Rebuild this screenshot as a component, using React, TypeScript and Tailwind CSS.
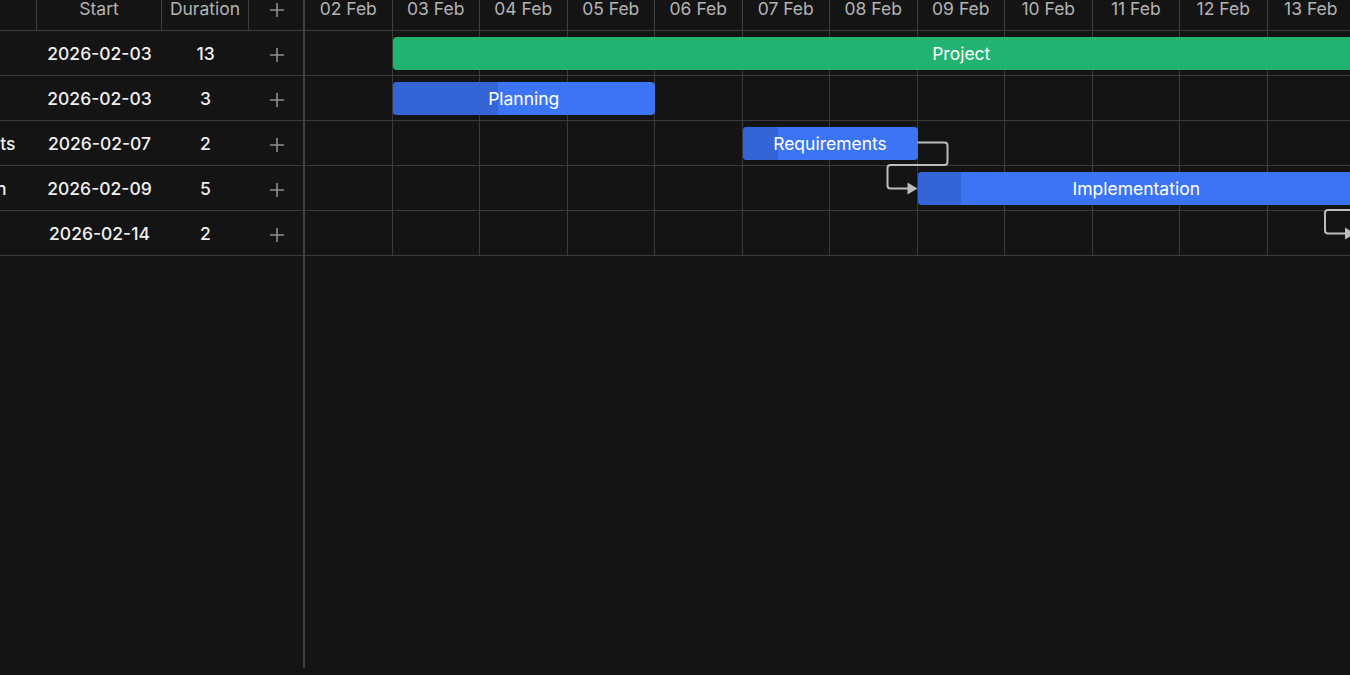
import * as React from "react";
import { Plus } from "lucide-react";

type Task = {
  id: number;
  name: string;
  indent: number;
  start: string;
  duration: number;
  day: number;
  progress: number;
  summary?: boolean;
};

const DAYS = ["02 Feb", "03 Feb", "04 Feb", "05 Feb", "06 Feb", "07 Feb", "08 Feb", "09 Feb", "10 Feb", "11 Feb", "12 Feb", "13 Feb", "14 Feb", "15 Feb", "16 Feb"];

const TASKS: Task[] = [
  { id: 1, name: "Project", indent: 8, start: "2026-02-03", duration: 13, day: 1, progress: 0, summary: true },
  { id: 2, name: "Planning", indent: 60, start: "2026-02-03", duration: 3, day: 1, progress: 0.4 },
  { id: 3, name: "Requirements", indent: 100, start: "2026-02-07", duration: 2, day: 5, progress: 0.2 },
  { id: 4, name: "Implementation", indent: 77, start: "2026-02-09", duration: 5, day: 7, progress: 0.1 },
  { id: 5, name: "Testing", indent: 80, start: "2026-02-14", duration: 2, day: 12, progress: 0 },
];

const COL = 87.5;
const ROW = 45;
const HEAD = 45;

const styles = {
  headCell: `
    flex items-center justify-center h-full pt-[3px]
    border-r border-[#3e3e3e] text-[17.5px] text-[#b3b3b3]
  `,
  row: `
    grid grid-cols-[237px_125px_87px_1fr] items-center h-[45px] pt-[3px]
    border-b border-[#3b3b3b] text-[17.5px] font-medium text-[#efefef]
  `,
};

// elbow connectors between dependent bars, drawn in chart coordinates
const Links = () => {
  const y = (i: number) => HEAD + i * ROW + ROW / 2;
  const paths: { from: number; to: number; x1: number; x2: number }[] = [
    { from: 2, to: 3, x1: 7 * COL, x2: 7 * COL },
    { from: 3, to: 4, x1: 12 * COL, x2: 12 * COL },
  ];
  return (
    <svg className="absolute left-0 top-0 pointer-events-none" width={DAYS.length * COL} height={400}>
      {paths.map((p, i) => {
        const ya = y(p.from) - 1;
        const yb = y(p.to);
        const mid = HEAD + p.to * ROW - 1;
        const d = `M ${p.x1} ${ya} H ${p.x1 + 27} Q ${p.x1 + 30} ${ya} ${p.x1 + 30} ${ya + 3} V ${mid - 3} Q ${p.x1 + 30} ${mid} ${p.x1 + 27} ${mid} H ${p.x2 - 27} Q ${p.x2 - 30} ${mid} ${p.x2 - 30} ${mid + 3} V ${yb - 3} Q ${p.x2 - 30} ${yb} ${p.x2 - 27} ${yb} H ${p.x2 - 9}`;
        return (
          <g key={i}>
            <path d={d} fill="none" stroke="#bcbcbc" strokeWidth={2} />
            <polygon points={`${p.x2 - 10},${yb - 6} ${p.x2},${yb} ${p.x2 - 10},${yb + 6}`} fill="#bcbcbc" />
          </g>
        );
      })}
    </svg>
  );
};

const App: React.FC = () => {
  return (
    <div className="h-screen w-screen overflow-hidden bg-[#141414] font-['Inter','Noto_Sans',sans-serif]">
      <div className="flex h-[682px] -mt-[14px] -ml-[200px]">
        {/* task grid */}
        <div className="w-[505px] shrink-0 border-r-2 border-[#3e3e3e]">
          <div className="grid grid-cols-[237px_125px_87px_1fr] h-[45px] border-b border-[#3e3e3e]">
            <div className={styles.headCell}>Task name</div>
            <div className={styles.headCell}>Start</div>
            <div className={styles.headCell}>Duration</div>
            <div className="flex items-center justify-center pt-[3px] pl-[2px] text-[#8e8e8e]">
              <Plus size={22} strokeWidth={1.75} />
            </div>
          </div>
          {TASKS.map((t) => (
            <div key={t.id} className={styles.row}>
              <div className="truncate" style={{ paddingLeft: t.indent }}>
                {t.name}
              </div>
              <div className="text-center">{t.start}</div>
              <div className="text-center">{t.duration}</div>
              <div className="flex justify-center pl-[2px] text-[#8e8e8e]">
                <Plus size={22} strokeWidth={1.75} />
              </div>
            </div>
          ))}
        </div>

        {/* timeline */}
        <div className="relative flex-1 overflow-hidden">
          <div className="flex h-[45px] border-b border-[#3e3e3e] w-max">
            {DAYS.map((d) => (
              <div
                key={d}
                className="w-[87.5px] shrink-0 flex items-center justify-center pt-[3px] border-r border-[#3e3e3e] text-[17.5px] text-[#b3b3b3]"
              >
                {d}
              </div>
            ))}
          </div>
          {TASKS.map((t) => (
            <div key={t.id} className="relative flex h-[45px] border-b border-[#3b3b3b] w-max">
              {DAYS.map((d) => (
                <div key={d} className="w-[87.5px] shrink-0 border-r border-[#3b3b3b]" />
              ))}
              <div
                className={
                  "absolute top-[6px] h-[33px] pt-[2px] rounded-[4px] overflow-hidden flex items-center justify-center text-[17.5px] text-white " +
                  (t.summary ? "bg-[#21b36f]" : "bg-[#3b74f5]")
                }
                style={{ left: t.day * COL, width: t.duration * COL }}
              >
                {t.progress > 0 && (
                  <div className="absolute left-0 top-0 h-full bg-[#3464d6]" style={{ width: `${t.progress * 100}%` }} />
                )}
                <span className="relative">{t.name}</span>
              </div>
            </div>
          ))}
          <Links />
        </div>
      </div>
    </div>
  );
};

export default App;
